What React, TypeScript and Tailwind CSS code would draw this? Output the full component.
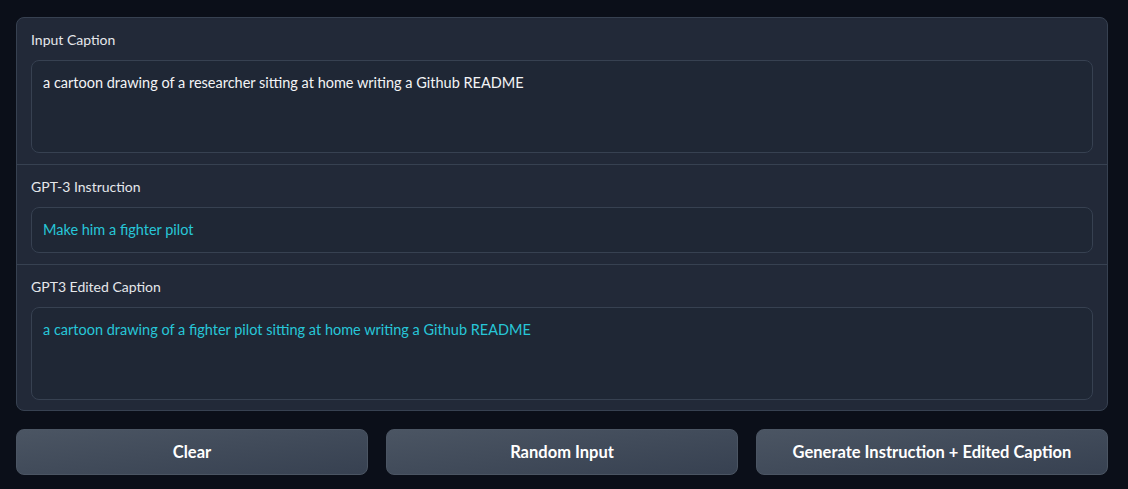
import React from 'react';

const fieldFont = { fontFamily: '"Source Sans Pro", Lato, "Noto Sans", sans-serif' };

const Field = ({
  label,
  value,
  rows,
  accent,
  last,
}: {
  label: string;
  value: string;
  rows: 'tall' | 'short';
  accent?: boolean;
  last?: boolean;
}) => (
  <div
    className={`flex flex-col gap-[9px] px-[14px] pt-[11px] ${
      last ? 'pb-[10px]' : 'pb-[11px] border-b border-[#374151]'
    }`}
  >
    <span className="text-[14px] leading-[22px] text-[#e5e7eb]">{label}</span>
    <div
      className={`rounded-[8px] border border-[#374151] bg-[#1f2735] px-[11px] pt-[10px] ${
        rows === 'tall' ? 'h-[93px]' : 'h-[46px]'
      } ${accent ? 'text-[#27c6d8]' : 'text-[#f3f4f6]'} text-[14.5px] leading-[24px]`}
    >
      {value}
    </div>
  </div>
);

export default function App() {
  return (
    <div
      className="min-h-[489px] w-full bg-[#0b0f19] pl-[16px] pr-[20px] pt-[17px]"
      style={fieldFont}
    >
      <div className="overflow-hidden rounded-[8px] border border-[#374151] bg-[#222938]">
        <Field
          label="Input Caption"
          value="a cartoon drawing of a researcher sitting at home writing a Github README"
          rows="tall"
        />
        <Field label="GPT-3 Instruction" value="Make him a fighter pilot" rows="short" accent />
        <Field
          label="GPT3 Edited Caption"
          value="a cartoon drawing of a fighter pilot sitting at home writing a Github README"
          rows="tall"
          accent
          last
        />
      </div>
      <div className="mt-[18px] grid grid-cols-3 gap-[18px]">
        {['Clear', 'Random Input', 'Generate Instruction + Edited Caption'].map((t) => (
          <button
            key={t}
            className="h-[46px] rounded-[8px] border border-[#4b5563] bg-gradient-to-br from-[#4b5563] to-[#374151] text-[16.5px] font-bold text-white"
          >
            {t}
          </button>
        ))}
      </div>
    </div>
  );
}
